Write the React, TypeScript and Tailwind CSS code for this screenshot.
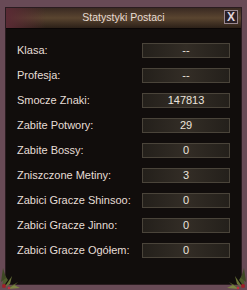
import React from "react";

const rows: [string, string][] = [
  ["Klasa:", "--"],
  ["Profesja:", "--"],
  ["Smocze Znaki:", "147813"],
  ["Zabite Potwory:", "29"],
  ["Zabite Bossy:", "0"],
  ["Zniszczone Metiny:", "3"],
  ["Zabici Gracze Shinsoo:", "0"],
  ["Zabici Gracze Jinno:", "0"],
  ["Zabici Gracze Ogółem:", "0"],
];

function Leaves({ flip }: { flip?: boolean }) {
  return (
    <svg
      width="22"
      height="26"
      viewBox="0 0 22 26"
      className={`absolute bottom-0 ${flip ? "right-0 -scale-x-100" : "left-0"}`}
    >
      <path d="M2 24 L4 10 L8 16 Z" fill="#4f5a2c" />
      <path d="M4 24 L12 12 L10 20 Z" fill="#6a7438" />
      <path d="M6 25 L18 18 L12 24 Z" fill="#59632e" />
      <path d="M1 18 L3 4 L6 14 Z" fill="#3e4824" />
      <path d="M8 25 L20 24 L14 21 Z" fill="#7d8544" />
      <circle cx="4" cy="22" r="2" fill="#a0202a" />
      <circle cx="9" cy="24" r="1.3" fill="#c03040" />
    </svg>
  );
}

export default function App() {
  return (
    <div
      className="relative w-[247px] h-[290px] bg-[#684a56] p-[5px] pt-[7px] pb-[5px]"
      style={{ fontFamily: '"Liberation Sans", Arial, sans-serif' }}
    >
      <div className="flex flex-col h-full border border-[#2a1c20] bg-[#110d0c]">
        {/* title bar */}
        <div className="relative h-[21px] flex items-center justify-center bg-gradient-to-b from-[#3a2a22] via-[#5a4530] to-[#2c2018] border-b border-[#0a0606]">
          <div className="absolute left-0 top-0 h-full w-[40px] bg-gradient-to-r from-[#5a2a34] to-transparent" />
          <span className="relative text-[10.5px] text-[#e8dcd4]">Statystyki Postaci</span>
          <div className="absolute right-[3px] top-[2px] w-[14px] h-[14px] border border-[#9a8890] bg-[#2a2026] flex items-center justify-center text-[12px] font-bold text-[#e0d4dc] leading-none">
            X
          </div>
        </div>

        {/* body */}
        <div className="flex-1 flex flex-col gap-[10px] pt-[14px] pl-[11px] pr-[11px]">
          {rows.map(([label, value]) => (
            <div key={label} className="flex items-center justify-between h-[15px]">
              <span className="text-[11px] text-[#e6ddd6] leading-none">{label}</span>
              <div className="w-[88px] h-[15px] border border-[#4a443a] bg-gradient-to-r from-[#24201b] via-[#332d26] to-[#24201b] flex items-center justify-center">
                <span className="text-[11px] text-[#ece4dc] leading-none">{value}</span>
              </div>
            </div>
          ))}
        </div>
      </div>
      <Leaves />
      <Leaves flip />
    </div>
  );
}
